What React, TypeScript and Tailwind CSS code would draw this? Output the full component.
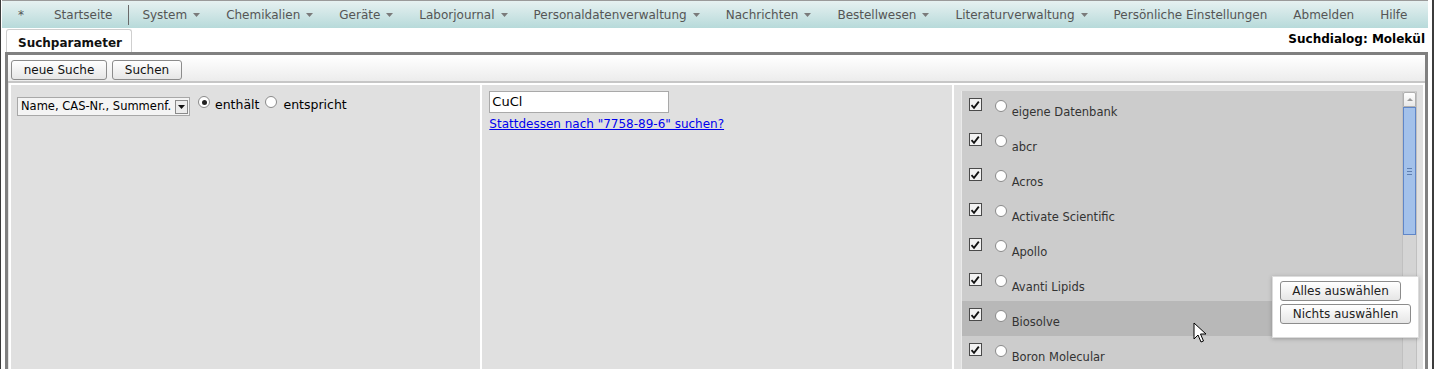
import React from "react";

const menu: { label: string; arrow?: boolean }[] = [
  { label: "System", arrow: true },
  { label: "Chemikalien", arrow: true },
  { label: "Geräte", arrow: true },
  { label: "Laborjournal", arrow: true },
  { label: "Personaldatenverwaltung", arrow: true },
  { label: "Nachrichten", arrow: true },
  { label: "Bestellwesen", arrow: true },
  { label: "Literaturverwaltung", arrow: true },
  { label: "Persönliche Einstellungen" },
  { label: "Abmelden" },
  { label: "Hilfe" },
];

const suppliers = [
  "eigene Datenbank",
  "abcr",
  "Acros",
  "Activate Scientific",
  "Apollo",
  "Avanti Lipids",
  "Biosolve",
  "Boron Molecular",
];

function Caret() {
  return (
    <svg className="ml-[6px] w-[7px] h-[4px]" viewBox="0 0 7 4">
      <path d="M0 0h7L3.5 4z" fill="#7a7a7a" />
    </svg>
  );
}

function Radio({ checked }: { checked?: boolean }) {
  return (
    <span className="w-[12px] h-[12px] rounded-full border border-[#8a8a8a] bg-white flex items-center justify-center shrink-0">
      {checked && <span className="w-[5px] h-[5px] rounded-full bg-[#222]" />}
    </span>
  );
}

function Check() {
  return (
    <span className="w-[13px] h-[13px] border border-[#4a4a4a] bg-[#f2f2f2] flex items-center justify-center shrink-0">
      <svg className="w-[10px] h-[10px]" viewBox="0 0 10 10">
        <path d="M1.5 5.2 4 7.8 8.8 1.6" fill="none" stroke="#111" strokeWidth={1.8} />
      </svg>
    </span>
  );
}

function Btn({ children, className = "" }: { children: React.ReactNode; className?: string }) {
  return (
    <button className={`h-[20px] rounded-[3px] border border-[#8c8c8c] bg-gradient-to-b from-white to-[#e6e6e6] text-[12px] text-[#111] leading-none ${className}`}>
      {children}
    </button>
  );
}

export default function App() {
  return (
    <div
      className="relative w-[1434px] h-[369px] overflow-hidden bg-white border-l border-r-2 border-[#3c3c3c] pl-px pr-[4px] text-[12px] text-[#222]"
      style={{ fontFamily: '"DejaVu Sans", Verdana, sans-serif' }}
    >
      {/* Menu */}
      <div className="h-[28px] border-t border-[#9a9a9a] bg-gradient-to-b from-[#e6f1f1] to-[#b7dada] flex items-center pl-[2px] text-[#555] whitespace-nowrap">
        <span className="pl-[14px] pr-[15px]">*</span>
        <span className="pl-[15px] pr-[16px]">Startseite</span>
        <span className="w-px h-[20px] bg-[#6a6a6a]" />
        {menu.map((m) => (
          <span key={m.label} className="px-[13px] flex items-center">
            {m.label}
            {m.arrow && <Caret />}
          </span>
        ))}
      </div>

      {/* Tab row */}
      <div className="h-[24px] flex items-end justify-between">
        <div className="ml-[4px] w-[126px] h-[23px] border border-b-0 border-[#cfcfcf] rounded-t-[3px] pl-[11px] pt-[4px] font-bold text-[#111]">
          Suchparameter
        </div>
        <div className="font-bold text-black pb-[4px] pr-[3px]">Suchdialog: Molekül</div>
      </div>

      {/* Panel */}
      <div className="ml-[3px] border-[3px] border-b-0 border-[#808080] h-[320px] flex flex-col">
        <div className="border-t border-white h-[28px] bg-gradient-to-b from-white to-[#ececec] flex items-start gap-[5px] pl-[3px] pt-[4px] border-b-2 border-b-[#c6c6c6]">
          <Btn className="w-[96px]">neue Suche</Btn>
          <Btn className="w-[70px]">Suchen</Btn>
        </div>
        <div className="flex-1 bg-white p-[2px] pb-0 grid grid-cols-3 gap-[2px] border-l border-[#e6e6e6]">
          {/* Column 1 */}
          <div className="bg-[#e0e0e0] pl-[6px] pt-[12px]">
            <div className="flex items-start">
              <div className="w-[173px] h-[19px] border border-[#a8a8a8] bg-[#f4f4f4] flex items-center justify-between pl-[3px] pr-px text-[11.5px] text-black">
                <span>Name, CAS-Nr., Summenf.</span>
                <span className="w-[13px] h-[14px] border border-[#8a8a8a] bg-[#ececec] flex items-center justify-center">
                  <svg className="w-[7px] h-[4px]" viewBox="0 0 7 4">
                    <path d="M0 0h7L3.5 4z" fill="#111" />
                  </svg>
                </span>
              </div>
              <div className="ml-[8px] -mt-px"><Radio checked /></div>
              <span className="ml-[5px] text-[12.5px] text-black leading-[16px]">enthält</span>
              <div className="ml-[6px] -mt-px"><Radio /></div>
              <span className="ml-[6px] text-[12.5px] text-black leading-[16px]">entspricht</span>
            </div>
          </div>

          {/* Column 2 */}
          <div className="bg-[#e0e0e0] pl-[7px] pt-[6px]">
            <div className="w-[180px] h-[22px] border border-[#a9a9a9] bg-white flex items-center pl-[2px] text-[13px] text-black">
              CuCl
            </div>
            <a className="block mt-[3px] text-[12px] text-[#0000ee] underline leading-[16px]" href="#">
              Stattdessen nach "7758-89-6" suchen?
            </a>
          </div>

          {/* Column 3 */}
          <div className="bg-[#e0e0e0] pl-[7px] pr-[6px] pt-[6px]">
            <div className="flex h-full border-l border-[#eaeaea] bg-[#cccccc]">
              <div className="flex-1">
                {suppliers.map((s) => (
                  <div
                    key={s}
                    className={`h-[35px] flex items-start pl-[7px] ${s === "Biosolve" ? "bg-[#b8b8b8]" : ""}`}
                  >
                    <div className="mt-[7px]"><Check /></div>
                    <div className="ml-[13px] mt-[9px]"><Radio /></div>
                    <span className="ml-[5px] mt-[13px] leading-[16px] text-[11.5px] text-[#333]">{s}</span>
                  </div>
                ))}
              </div>
              {/* Scrollbar */}
              <div className="w-[15px] mt-[1px] bg-[#d4d4d4] border-x border-[#c0c0c0] flex flex-col">
                <div className="h-[15px] bg-gradient-to-b from-white to-[#e8e8e8] border border-[#b0b0b0] rounded-t-[2px] flex items-center justify-center">
                  <svg className="w-[6px] h-[3px]" viewBox="0 0 6 3">
                    <path d="M0 3h6L3 0z" fill="#9a9a9a" />
                  </svg>
                </div>
                <div className="h-[128px] bg-[#a3c1ea] border border-[#5f86c8] flex flex-col items-center justify-center gap-[2px]">
                  <span className="w-[5px] h-px bg-[#5f7fb0]" />
                  <span className="w-[5px] h-px bg-[#5f7fb0]" />
                  <span className="w-[5px] h-px bg-[#5f7fb0]" />
                </div>
              </div>
            </div>
          </div>
        </div>
      </div>

      {/* Context popup */}
      <div className="absolute left-[1271px] top-[276px] w-[147px] h-[62px] bg-white border border-[#dcdcdc] shadow-[0_1px_4px_rgba(0,0,0,0.25)] pl-[7px] pt-[4px] flex flex-col gap-[3px]">
        <Btn className="w-[121px] text-[#222]">Alles auswählen</Btn>
        <Btn className="w-[131px] text-[#222]">Nichts auswählen</Btn>
      </div>

      {/* Mouse cursor */}
      <svg className="absolute left-[1192px] top-[322px] w-[13px] h-[21px]" viewBox="0 0 13 21">
        <path d="M1 1v16l4-4 3 7 2.5-1-3-7h5.5z" fill="white" stroke="black" strokeWidth={1} strokeLinejoin="round" />
      </svg>
    </div>
  );
}
